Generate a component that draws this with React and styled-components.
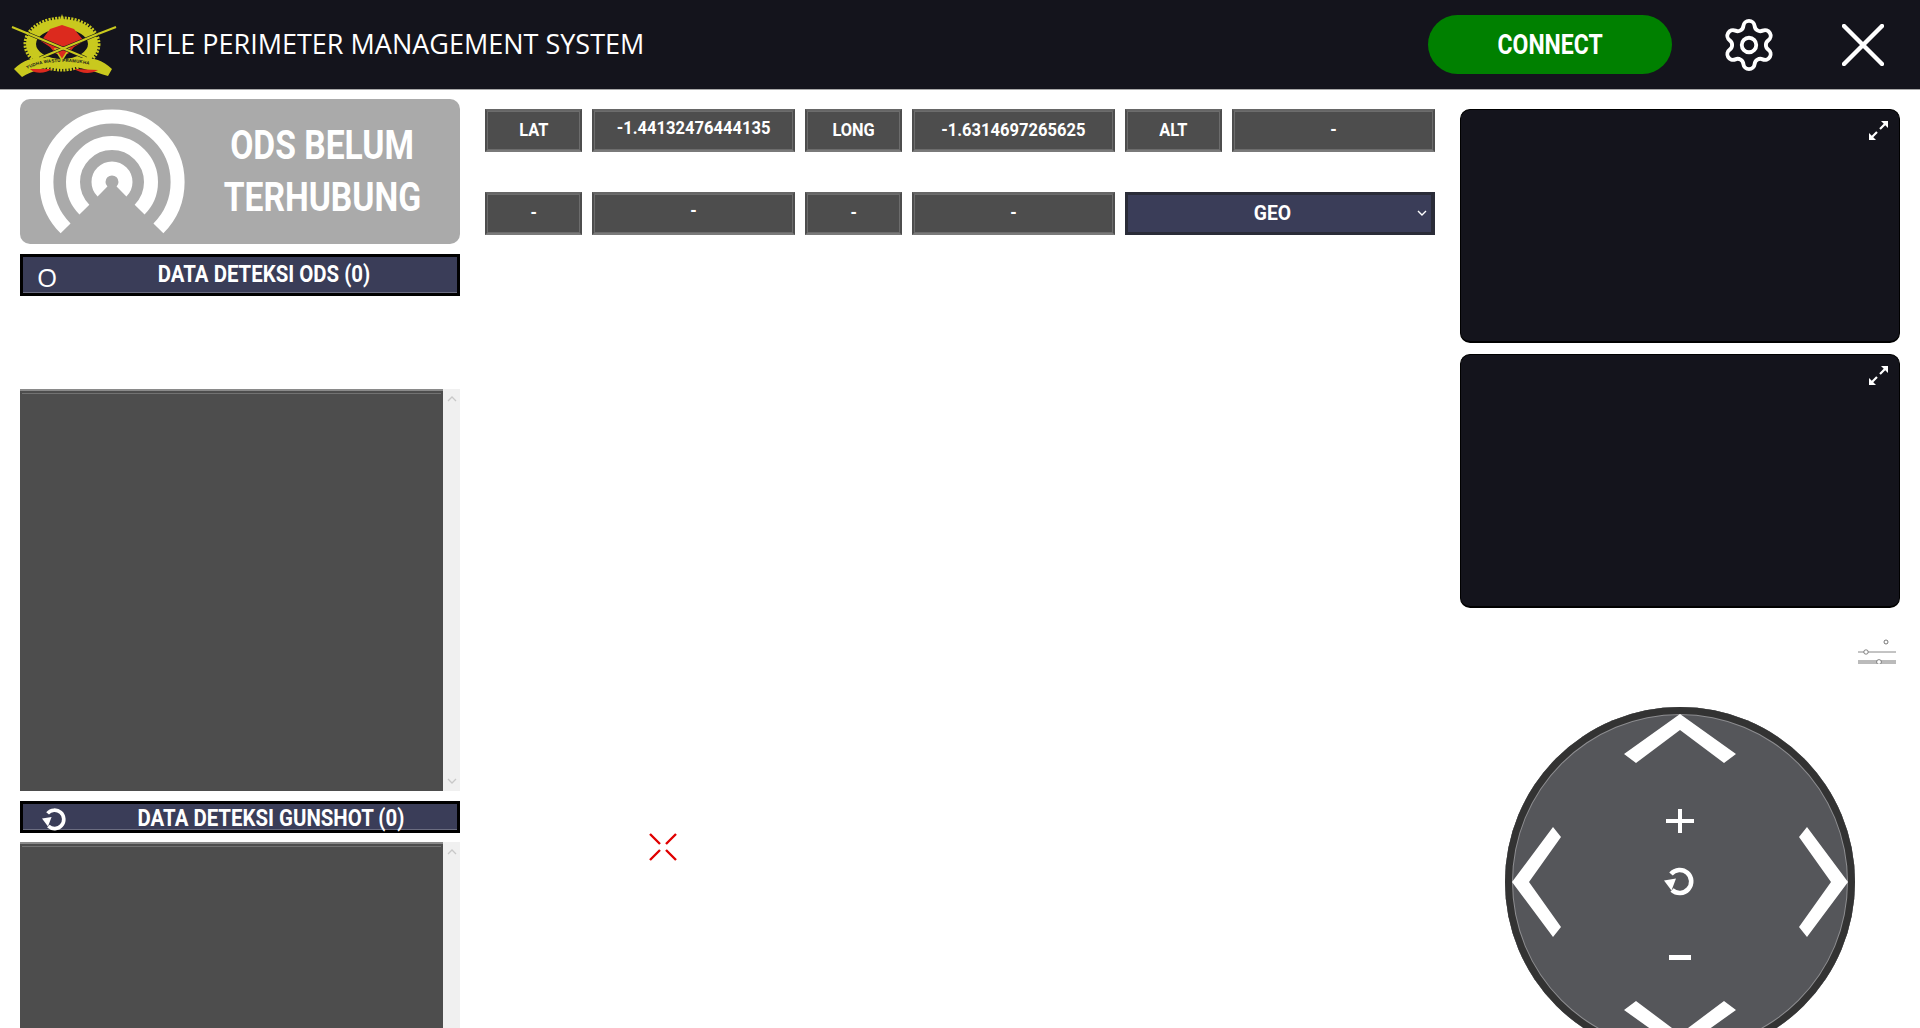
import React from 'react'
import styled, { createGlobalStyle } from 'styled-components'
import { Settings } from 'lucide-react'

const GlobalStyle = createGlobalStyle`
  html, body {
    margin: 0;
    padding: 0;
    height: 100%;
    overflow: hidden;
    background: #fff;
  }
  * { box-sizing: border-box; }
`

const NARROW = `"Roboto", "Liberation Sans", sans-serif`

const Page = styled.div`
  width: 1920px;
  height: 1028px;
  overflow: hidden;
  font-family: ${NARROW};
`

// no condensed family is installed, so the bold labels get squeezed
const Squeeze = styled.span`
  display: inline-block;
  white-space: nowrap;
  transform: scaleX(${p => p.$x});
`

const TopBar = styled.header`
  height: 90px;
  background: #14141c;
  border-bottom: 1px solid #a8a8a8;
  display: flex;
  align-items: center;
  padding-left: 8px;
`

const Logo = styled.svg`
  width: 112px;
  height: 72px;
  margin-right: 8px;
  flex: none;
`

const Title = styled.h1`
  margin: 0;
  padding-bottom: 2px;
  font-family: "Open Sans", sans-serif;
  font-weight: 400;
  font-size: 27px;
  color: #fff;
  white-space: nowrap;
  flex: 1;
`

const ConnectButton = styled.button`
  width: 244px;
  height: 59px;
  border: none;
  border-radius: 30px;
  background: #008000;
  color: #fff;
  font-family: ${NARROW};
  font-weight: 700;
  font-size: 28px;
  padding: 0;
  margin-right: 48px;
`

const GearButton = styled.div`
  display: flex;
  width: 58px;
  justify-content: center;
  margin-right: 64px;
  color: #fff;
`

const CloseIcon = styled.svg`
  width: 42px;
  height: 42px;
  margin-right: 36px;
`

const Main = styled.main`
  display: grid;
  grid-template-columns: 440px 950px 440px;
  column-gap: 25px;
  padding-left: 20px;
  height: 938px;
`

const LeftColumn = styled.section`
  padding-top: 9px;
  display: flex;
  flex-direction: column;
`

const StatusCard = styled.div`
  height: 145px;
  border-radius: 10px;
  background: #aaaaaa;
  display: flex;
  align-items: flex-start;
  flex: none;
`

const StatusIcon = styled.svg`
  width: 145px;
  height: 145px;
  margin-left: 20px;
  flex: none;
`

const StatusText = styled.div`
  flex: 1;
  padding-top: 20px;
  color: #fff;
  font-weight: 700;
  font-size: 41px;
  line-height: 52px;
  text-align: center;
`

const SectionBar = styled.div`
  height: ${p => p.$height}px;
  flex: none;
  margin-top: ${p => p.$top}px;
  background: #3a3d58;
  border: 3px solid #000;
  box-shadow: inset 0 -1px 0 #6a6c80;
  color: #fff;
  font-weight: 700;
  font-size: 24px;
  display: grid;
  grid-template-columns: ${p => p.$iconCol}px 1fr;
  align-items: center;
`

const BarIcon = styled.div`
  display: flex;
  align-items: center;
  justify-content: center;
  font-family: "Open Sans", sans-serif;
  font-weight: 400;
  font-size: 26px;
  line-height: 1;
  padding-top: ${p => p.$drop}px;
`

const BarLabel = styled.div`
  text-align: center;
  white-space: nowrap;
  padding-bottom: 2px;
`

const ListRow = styled.div`
  display: flex;
  flex: ${p => (p.$fill ? 1 : 'none')};
  height: ${p => (p.$fill ? 'auto' : `${p.$height}px`)};
  margin-top: ${p => p.$top}px;
`

const ListBody = styled.div`
  width: 423px;
  background: #4d4d4d;
  border-top: 2px solid #8a8a8a;
  &::before {
    content: '';
    display: block;
    margin: 2px 2px 0;
    height: 1px;
    background: #727272;
  }
`

const ScrollTrack = styled.div`
  flex: 1;
  background: #f0f0f0;
  display: flex;
  flex-direction: column;
  justify-content: space-between;
  align-items: center;
  padding: 6px 0;
  color: #c8c8c8;
`

const CenterColumn = styled.section`
  padding-top: 19px;
  position: relative;
`

const ReadoutRow = styled.div`
  display: grid;
  grid-template-columns: 97px 203px 97px 203px 97px 203px;
  column-gap: 10px;
  margin-bottom: 40px;
`

const Cell = styled.div`
  height: 43px;
  background: #4d4d4d;
  border: 2px solid #4d4d4d;
  border-top-color: #666;
  border-bottom-color: #7a7a7a;
  box-shadow: inset 0 0 0 1px #6c6c6c;
  color: #fff;
  font-weight: 700;
  font-size: ${p => (p.$value ? 18 : 19)}px;
  display: flex;
  align-items: center;
  justify-content: center;
  padding-bottom: ${p => (p.$raised ? 6 : 2)}px;
`

const ModeSelect = styled.div`
  grid-column: span 2;
  height: 43px;
  background: #3a3d58;
  border: 3px solid #2a2c38;
  border-right-width: 4px;
  color: #fff;
  font-weight: 700;
  font-size: 21px;
  display: grid;
  grid-template-columns: 1fr 12px;
  align-items: center;
  text-align: center;
  padding-right: 2px;
  padding-bottom: 2px;
`

const Crosshair = styled.svg`
  position: absolute;
  left: 163px;
  top: 742px;
  width: 30px;
  height: 30px;
`

const RightColumn = styled.section`
  padding-top: 19px;
  display: flex;
  flex-direction: column;
`

const VideoPanel = styled.div`
  height: ${p => p.$height}px;
  margin-top: ${p => p.$top}px;
  background: #14141c;
  border: 1px solid #000;
  border-bottom-width: 2px;
  border-radius: 10px;
  display: flex;
  justify-content: flex-end;
  align-items: flex-start;
  padding: 10px 10px;
  flex: none;
`

const SliderStack = styled.svg`
  width: 40px;
  height: 26px;
  margin-top: 30px;
  margin-right: 3px;
  align-self: flex-end;
  flex: none;
`

const Joystick = styled.div`
  width: 350px;
  height: 350px;
  flex: none;
  margin-top: 43px;
  margin-left: 45px;
  border-radius: 50%;
  background: #55565a;
  box-shadow: inset 0 0 0 7px #333333, inset 0 0 0 8px #8d8d90;
`

const JoystickArt = styled.svg`
  display: block;
  width: 350px;
  height: 350px;
`

const ReloadGlyph = ({ size = 30, cx, cy }) => (
  <g transform={`translate(${cx - size / 2} ${cy - size / 2}) scale(${size / 30})`}>
    <path d="M7 8 A11.5 11.5 0 1 1 8 24" fill="none" stroke="#fff" strokeWidth="4.6" />
    <polygon points="0,14.5 12,12.5 7.5,24.5" fill="#fff" />
  </g>
)

const ScrollChevron = ({ up }) => (
  <svg width="10" height="7" viewBox="0 0 10 7">
    <path d={up ? 'M1 6 L5 2 L9 6' : 'M1 1 L5 5 L9 1'} fill="none" stroke="currentColor" strokeWidth="1.3" />
  </svg>
)

const ExpandGlyph = () => (
  <svg width="21" height="21" viewBox="0 0 21 21">
    <polygon points="13,1 20,1 20,8" fill="#fff" />
    <polygon points="1,13 1,20 8,20" fill="#fff" />
    <path d="M12 9 L17 4 M9 12 L4 17" stroke="#fff" strokeWidth="2.2" />
  </svg>
)

const ArmyLogo = () => (
  <Logo viewBox="8 8 112 72">
    {/* wreath */}
    <ellipse cx="62" cy="43" rx="31" ry="20" fill="none" stroke="#c9c91e" strokeWidth="10" />
    <ellipse cx="62" cy="43" rx="36" ry="25" fill="none" stroke="#c9c91e" strokeWidth="5" strokeDasharray="2 1.2" />
    <polygon points="62,13 64,19 70,19 65,22.5 67,28 62,25 57,28 59,22.5 54,19 60,19" fill="#c9c91e" />
    {/* red shield */}
    <polygon points="62,24 74,28 84,40 74,46 68,53 56,53 50,46 41,40 50,28" fill="#dc2a1e" />
    <polygon points="55,48 69,48 62,59" fill="#dc2a1e" stroke="#c9c91e" strokeWidth="1.5" />
    {/* rifles */}
    <path d="M12 26 L29 33" stroke="#c9c91e" strokeWidth="2" />
    <path d="M116 26 L98 33" stroke="#c9c91e" strokeWidth="2" />
    <path d="M29 33 L86 57" stroke="#14141c" strokeWidth="3.2" />
    <path d="M98 33 L40 57" stroke="#14141c" strokeWidth="3.2" />
    <path d="M29 33 L86 57" stroke="#c9c91e" strokeWidth="2.2" />
    <path d="M98 33 L40 57" stroke="#c9c91e" strokeWidth="2.2" />
    {/* banner */}
    <path d="M14 68 C30 52 46 58 62 58 C78 58 96 52 112 68 L108 75 C92 70 78 65 62 65 C46 65 32 70 22 76 Z" fill="#c9c91e" />
    <path d="M30 68 C36 74 46 72 52 68 Z" fill="#dc2a1e" />
    <path d="M74 68 C80 72 90 74 98 69 Z" fill="#dc2a1e" />
    <path id="motto" d="M27 68 C40 62 50 61 62 61 C76 61 88 62 100 68" fill="none" />
    <text fontFamily="Liberation Sans, sans-serif" fontSize="4.4" fontWeight="700" fill="#14141c" letterSpacing="0.2">
      <textPath href="#motto">YUDHA WASTU PRAMUKHA</textPath>
    </text>
  </Logo>
)

const ReadoutCell = ({ children, value, raised }) => (
  <Cell $value={value} $raised={raised}>
    <Squeeze $x={value ? 0.92 : 0.86}>{children}</Squeeze>
  </Cell>
)

export default function App() {
  return (
    <Page>
      <GlobalStyle />
      <TopBar>
        <ArmyLogo />
        <Title>RIFLE PERIMETER MANAGEMENT SYSTEM</Title>
        <ConnectButton><Squeeze $x={0.82}>CONNECT</Squeeze></ConnectButton>
        <GearButton><Settings size={58} strokeWidth={1.6} /></GearButton>
        <CloseIcon viewBox="0 0 42 42">
          <path d="M2 2 L40 40 M40 2 L2 40" stroke="#fff" strokeWidth="4.4" strokeLinecap="round" />
        </CloseIcon>
      </TopBar>

      <Main>
        <LeftColumn>
          <StatusCard>
            <StatusIcon viewBox="0 0 145 145">
              <g fill="none" stroke="#fff" strokeWidth="14">
                <path d="M45.6 129.4 A65.6 65.6 0 1 1 138.4 129.4" transform="translate(-20 0)" />
                <path d="M64.4 110.6 A39 39 0 1 1 119.6 110.6" transform="translate(-20 0)" />
                <path d="M82.5 92.5 A13.5 13.5 0 1 1 101.5 92.5" transform="translate(-20 0)" />
              </g>
            </StatusIcon>
            <StatusText>
              <Squeeze $x={0.82}>ODS BELUM</Squeeze><br />
              <Squeeze $x={0.82}>TERHUBUNG</Squeeze>
            </StatusText>
          </StatusCard>

          <SectionBar $height={42} $top={10} $iconCol={48}>
            <BarIcon $drop={4}>O</BarIcon>
            <BarLabel><Squeeze $x={0.85}>DATA DETEKSI ODS (0)</Squeeze></BarLabel>
          </SectionBar>
          <ListRow $height={402} $top={93}>
            <ListBody />
            <ScrollTrack><ScrollChevron up /><ScrollChevron /></ScrollTrack>
          </ListRow>

          <SectionBar $height={32} $top={10} $iconCol={62}>
            <BarIcon $drop={0}>
              <svg width="24" height="24" viewBox="0 0 30 30">
                <ReloadGlyph size={30} cx={15} cy={15} />
              </svg>
            </BarIcon>
            <BarLabel><Squeeze $x={0.85}>DATA DETEKSI GUNSHOT (0)</Squeeze></BarLabel>
          </SectionBar>
          <ListRow $fill $top={9}>
            <ListBody />
            <ScrollTrack><ScrollChevron up /><ScrollChevron /></ScrollTrack>
          </ListRow>
        </LeftColumn>

        <CenterColumn>
          <ReadoutRow>
            <ReadoutCell>LAT</ReadoutCell>
            <ReadoutCell value raised>-1.44132476444135</ReadoutCell>
            <ReadoutCell>LONG</ReadoutCell>
            <ReadoutCell value>-1.6314697265625</ReadoutCell>
            <ReadoutCell>ALT</ReadoutCell>
            <ReadoutCell value>-</ReadoutCell>
          </ReadoutRow>
          <ReadoutRow>
            <ReadoutCell>-</ReadoutCell>
            <ReadoutCell value raised>-</ReadoutCell>
            <ReadoutCell>-</ReadoutCell>
            <ReadoutCell value>-</ReadoutCell>
            <ModeSelect>
              <Squeeze $x={0.92}>GEO</Squeeze>
              <svg width="10" height="8" viewBox="0 0 10 8">
                <path d="M1 2 L5 6 L9 2" fill="none" stroke="#fff" strokeWidth="1.4" />
              </svg>
            </ModeSelect>
          </ReadoutRow>
          <Crosshair viewBox="0 0 30 30">
            <path d="M2 2 L12 12 M28 2 L18 12 M2 28 L12 18 M28 28 L18 18" stroke="#e00000" strokeWidth="2.4" />
          </Crosshair>
        </CenterColumn>

        <RightColumn>
          <VideoPanel $height={234} $top={0}><ExpandGlyph /></VideoPanel>
          <VideoPanel $height={254} $top={11}><ExpandGlyph /></VideoPanel>
          <SliderStack viewBox="0 0 40 26">
            <circle cx="29" cy="4" r="2" fill="#fff" stroke="#555" strokeWidth="0.8" />
            <path d="M1 14 H39" stroke="#888" strokeWidth="1" />
            <circle cx="9" cy="14" r="2.2" fill="#fff" stroke="#666" strokeWidth="0.8" />
            <path d="M1 23 H39 M1 25 H39" stroke="#777" strokeWidth="1" />
            <circle cx="22" cy="24" r="2.4" fill="#fff" stroke="#666" strokeWidth="0.8" />
          </SliderStack>
          <Joystick>
            <JoystickArt viewBox="0 0 350 350">
              <g fill="#fff">
                <polygon points="175,7 231,47 219,56 175,23 131,56 119,47" />
                <polygon points="175,343 231,303 219,294 175,327 131,294 119,303" />
                <polygon points="7,175 48,120 56,130 24,175 56,220 48,230" />
                <polygon points="343,175 302,120 294,130 326,175 294,220 302,230" />
                <rect x="161" y="112" width="28" height="4" />
                <rect x="173" y="102" width="4" height="24" />
                <rect x="164" y="248" width="22" height="5" />
              </g>
              <ReloadGlyph size={30} cx={174} cy={174} />
            </JoystickArt>
          </Joystick>
        </RightColumn>
      </Main>
    </Page>
  )
}
